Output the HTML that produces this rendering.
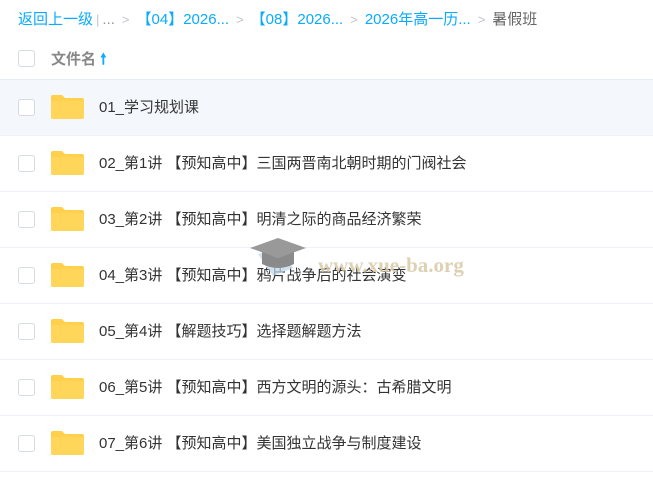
<!DOCTYPE html><html><head><meta charset="utf-8"><style>
body{margin:0;width:653px;height:499px;overflow:hidden;background:#fff;font-family:"Liberation Sans","Noto Sans CJK SC",sans-serif;}
.bc{position:absolute;top:8px;left:18px;font-size:15px;color:#09aaff;white-space:nowrap}
.bc .g{color:#c0c4cc;margin:0 7px;font-size:13px}
.bc .d{color:#999}
.hd{position:absolute;top:40px;left:0;width:653px;height:39px;border-bottom:1px solid #e8edf3}
.cb{position:absolute;left:18px;width:15px;height:15px;border:1px solid #d6dbe1;border-radius:3px;background:#fff}
.row{position:absolute;left:0;width:653px;height:55px;border-bottom:1px solid #eef1f5}
.row .cb{top:19px}
.fold{position:absolute;left:51px;top:15px;width:33px;height:24px}
.t{position:absolute;left:99px;top:16px;font-size:15px;color:#333}
</style></head><body>
<div class="bc">返回上一级<span class="g" style="margin:0 3px">|</span><span class="d">...</span><span class="g">&gt;</span>【04】2026...<span class="g">&gt;</span>【08】2026...<span class="g">&gt;</span>2026年高一历...<span class="g">&gt;</span><span style="color:#666">暑假班</span></div>
<div class="hd"><div class="cb" style="top:10px"></div><div style="position:absolute;left:51px;top:8px;font-size:15px;color:#888;font-weight:bold">文件名 <span style="color:#09aaff">🠕</span></div></div>
<div id="rows"></div>
<script>
var n=["01_学习规划课","02_第1讲 【预知高中】三国两晋南北朝时期的门阀社会","03_第2讲 【预知高中】明清之际的商品经济繁荣","04_第3讲 【预知高中】鸦片战争后的社会演变","05_第4讲 【解题技巧】选择题解题方法","06_第5讲 【预知高中】西方文明的源头：古希腊文明","07_第6讲 【预知高中】美国独立战争与制度建设"];
var h="";n.forEach(function(s,i){h+='<div class="row" style="top:'+(80+i*56)+'px;'+(i==0?'background:#f4f8fd':'')+'"><div class="cb"></div><svg class="fold" viewBox="0 0 33 24"><path d="M0 2a2 2 0 0 1 2-2h9l3 3h17a2 2 0 0 1 2 2v17a2 2 0 0 1-2 2H2a2 2 0 0 1-2-2z" fill="#ffd04b"/><path d="M0 6h33v16a2 2 0 0 1-2 2H2a2 2 0 0 1-2-2z" fill="#ffd659"/></svg><div class="t">'+s+'</div></div>'});
document.getElementById("rows").innerHTML=h;
</script>
<svg style="position:absolute;left:248px;top:236px" width="60" height="50" viewBox="0 0 60 50"><path d="M10 18l15 22 20-8-10-20z" fill="#bcd6ea" opacity=".7"/><path d="M2 12L30 2l28 10-28 10z" fill="#999"/><path d="M14 16v12q16 8 32 0V16l-16 6z" fill="#8a8a8a"/></svg>
<div style="position:absolute;left:318px;top:253px;font:bold 21px 'Liberation Serif',serif;color:#d8c9a8;opacity:.85">www.xue-ba.org</div>
</body></html>
